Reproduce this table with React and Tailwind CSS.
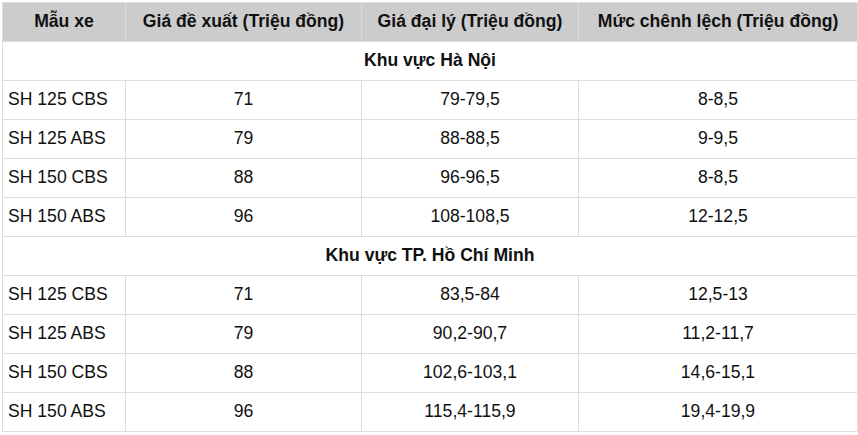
import React from 'react';

const hanoi = [
  ['SH 125 CBS', '71', '79-79,5', '8-8,5'],
  ['SH 125 ABS', '79', '88-88,5', '9-9,5'],
  ['SH 150 CBS', '88', '96-96,5', '8-8,5'],
  ['SH 150 ABS', '96', '108-108,5', '12-12,5'],
];

const hcm = [
  ['SH 125 CBS', '71', '83,5-84', '12,5-13'],
  ['SH 125 ABS', '79', '90,2-90,7', '11,2-11,7'],
  ['SH 150 CBS', '88', '102,6-103,1', '14,6-15,1'],
  ['SH 150 ABS', '96', '115,4-115,9', '19,4-19,9'],
];

const Row = ({ row }) => (
  <tr className="h-[39px]">
    <td className="border border-[#dcdcdc] px-[5px] text-left">{row[0]}</td>
    <td className="border border-[#dcdcdc] px-[5px] text-center">{row[1]}</td>
    <td className="border border-[#dcdcdc] px-[5px] text-center">{row[2]}</td>
    <td className="border border-[#dcdcdc] px-[5px] text-center">{row[3]}</td>
  </tr>
);

const Region = ({ title }) => (
  <tr className="h-[39px]">
    <td colSpan={4} className="border border-[#dcdcdc] text-center font-bold">{title}</td>
  </tr>
);

export default function App() {
  return (
    <div className="bg-white w-[858px] h-[435px] pt-[2px] pl-[2px]" style={{ fontFamily: '"Liberation Sans", Arial, sans-serif' }}>
      <table className="border-collapse table-fixed w-[855px] text-[17.6px] leading-tight text-[#111]">
        <colgroup>
          <col className="w-[123px]" />
          <col className="w-[236px]" />
          <col className="w-[217px]" />
          <col className="w-[279px]" />
        </colgroup>
        <thead>
          <tr className="h-[39px] bg-[#cccccc] font-bold">
            <th className="border border-[#dcdcdc] px-[5px] text-center">Mẫu xe</th>
            <th className="border border-[#dcdcdc] px-[5px] text-center">Giá đề xuất (Triệu đồng)</th>
            <th className="border border-[#dcdcdc] px-[5px] text-center">Giá đại lý (Triệu đồng)</th>
            <th className="border border-[#dcdcdc] px-[5px] text-center">Mức chênh lệch (Triệu đồng)</th>
          </tr>
        </thead>
        <tbody>
          <Region title="Khu vực Hà Nội" />
          {hanoi.map((r) => <Row key={'hn' + r[0]} row={r} />)}
          <Region title="Khu vực TP. Hồ Chí Minh" />
          {hcm.map((r) => <Row key={'hcm' + r[0]} row={r} />)}
        </tbody>
      </table>
    </div>
  );
}
